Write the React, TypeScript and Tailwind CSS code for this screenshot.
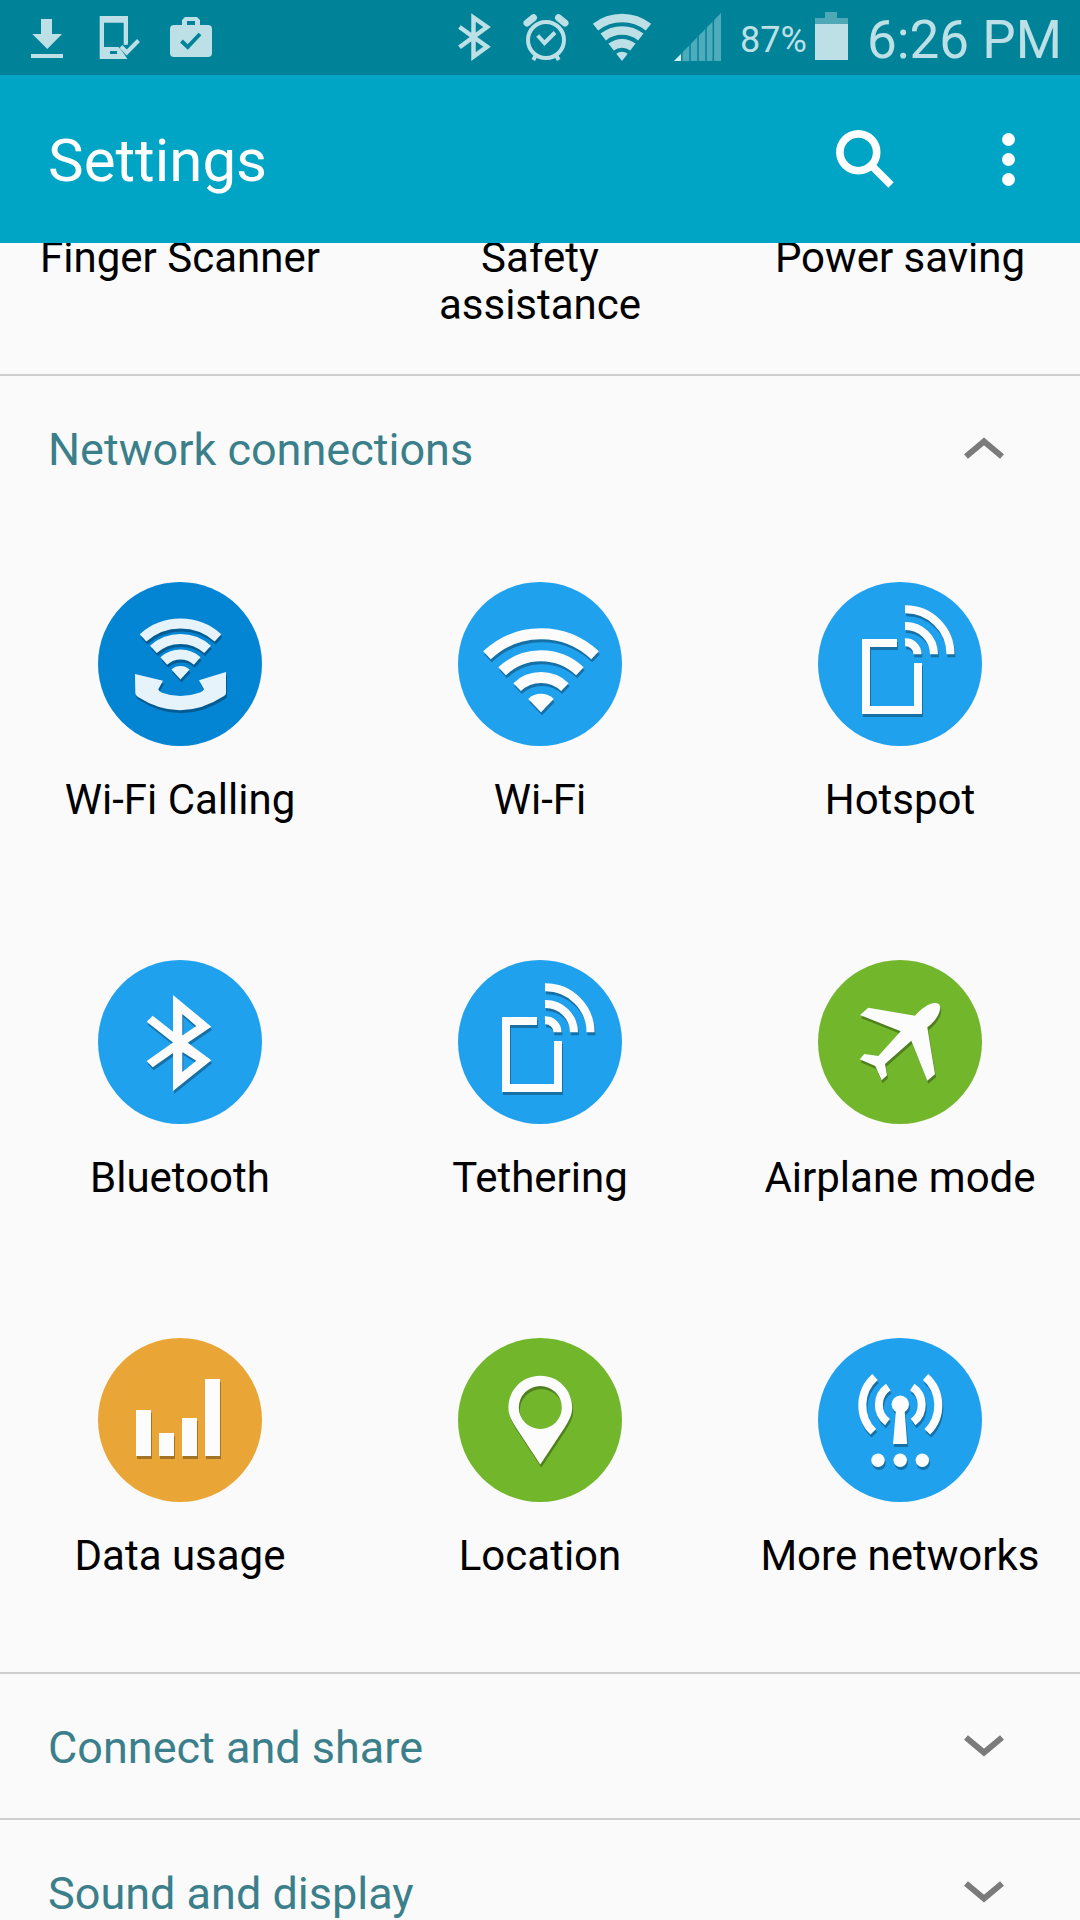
import { useState } from "react";
import type { ReactNode } from "react";

interface WifiWavesProps {
  cx: number;
  cy: number;
  radii: number[];
  dot: number;
  width: number;
  angle: number;
}

// Concentric bands that fan out upwards from (cx, cy)
function WifiWaves({ cx, cy, radii, dot, width, angle }: WifiWavesProps) {
  const a = (angle * Math.PI) / 180;
  const point = (r: number, side: number) => `${cx + side * r * Math.sin(a)} ${cy - r * Math.cos(a)}`;

  return (
    <>
      {radii.map((r) => (
        <path
          key={r}
          d={`M${point(r, -1)} A${r} ${r} 0 0 1 ${point(r, 1)}`}
          fill="none"
          stroke="currentColor"
          strokeWidth={width}
        />
      ))}
      <path d={`M${cx} ${cy} L${point(dot, -1)} A${dot} ${dot} 0 0 1 ${point(dot, 1)} Z`} fill="currentColor" />
    </>
  );
}

function HotspotGlyph() {
  return (
    <g fill="none" stroke="currentColor" strokeWidth="8">
      <path d="M79 61H48V128H100V81" />
      <path d="M87 27.3A45 45 0 0 1 132.5 72.3" />
      <path d="M87 44A28.5 28.5 0 0 1 116 72.3" />
      <path d="M87 60.3A12 12 0 0 1 99.5 72.3" />
    </g>
  );
}

const GLYPHS: Record<string, ReactNode> = {
  wifiCalling: (
    <g className="text-[#e6f3fb]">
      <WifiWaves cx={82.5} cy={97.5} radii={[56, 40.5, 25]} dot={13.6} width={10} angle={42} />
      <path
        d="M37 92 65 98.7 60.3 107.3Q61 110 64 110.7Q82.5 117.5 102 110.5Q105 110 106 107.3L101 98.3 128 90V111Q128 113 126 114Q82.5 142 40 115Q37.5 113.5 37.3 111Z"
        fill="currentColor"
      />
    </g>
  ),
  wifi: <WifiWaves cx={83} cy={130.3} radii={[78.5, 56.5, 34.7]} dot={18.5} width={11} angle={43.5} />,
  hotspot: <HotspotGlyph />,
  bluetooth: (
    <path
      fillRule="evenodd"
      fill="currentColor"
      d="M75 35 113.3 66.7 89.7 82.7 113.3 100.3 75 131V93L54.7 107.3 48.7 101 75 82.5 48.7 61.7 54.7 55.7 75 71.7ZM84.3 54V75.5L98.3 66ZM84.3 92V112L98.3 100.7Z"
    />
  ),
  airplane: (
    <path
      fill="currentColor"
      d="M97 55.7 50.3 47.7 42 55 82.7 71.3 60.3 96 46.3 94 41.7 99.3 57.3 106 63.7 120.3 69 115.3 67 104 93.3 80.7 109.3 120.7 117 114.3 109.3 67.3C118 61 125 50 121 44C114 40.5 104 48 97 55.7Z"
    />
  ),
  data: (
    <path fill="currentColor" d="M38 72H53V118H38ZM61 95H76V118H61ZM84 80H99V118H84ZM107 41H122V118H107Z" />
  ),
  location: (
    <path
      fillRule="evenodd"
      fill="currentColor"
      d="M82.3 37.7C64 37.7 50.4 52 50.4 70C50.4 77 54 83 58 89.5L82.3 126.5 106.7 89.5C110.7 83 114.2 77 114.2 70C114.2 52 100.6 37.7 82.3 37.7ZM82.3 48A21.4 21.4 0 1 1 82.3 91A21.4 21.4 0 1 1 82.3 48Z"
    />
  ),
  antenna: (
    <g fill="currentColor">
      <circle cx="82.3" cy="66.3" r="8.7" />
      <path d="M78 72H86.6L89.2 106H75Z" />
      <circle cx="60" cy="122.3" r="6.7" />
      <circle cx="82.2" cy="122.3" r="6.7" />
      <circle cx="104.3" cy="122.3" r="6.7" />
      <g fill="none" stroke="currentColor" strokeWidth="8">
        <path d="M70.3 49A21.5 21.5 0 0 0 69.5 84" />
        <path d="M94.3 49A21.5 21.5 0 0 1 95.1 84" />
        <path d="M57 39A37.7 37.7 0 0 0 55.3 93.8" />
        <path d="M107.6 39A37.7 37.7 0 0 1 109.3 93.8" />
      </g>
    </g>
  ),
};

interface Tile {
  label: string;
  glyph: string;
  color: string;
}

const NETWORK_TILES: Tile[] = [
  { label: "Wi-Fi Calling", glyph: "wifiCalling", color: "bg-[#0385d3]" },
  { label: "Wi-Fi", glyph: "wifi", color: "bg-[#20a1ee]" },
  { label: "Hotspot", glyph: "hotspot", color: "bg-[#20a1ee]" },
  { label: "Bluetooth", glyph: "bluetooth", color: "bg-[#20a1ee]" },
  { label: "Tethering", glyph: "hotspot", color: "bg-[#20a1ee]" },
  { label: "Airplane mode", glyph: "airplane", color: "bg-[#72b62b]" },
  { label: "Data usage", glyph: "data", color: "bg-[#e9a637]" },
  { label: "Location", glyph: "location", color: "bg-[#72b62b]" },
  { label: "More networks", glyph: "antenna", color: "bg-[#20a1ee]" },
];

const QUICK_LABELS = ["Finger Scanner", "Safety assistance", "Power saving"];

function SettingTile({ label, glyph, color }: Tile) {
  return (
    <button className="flex flex-col items-center px-8 pt-[44px] pb-[45px]">
      <span className={`block size-[164px] rounded-full text-[#fcfcfc] ${color}`}>
        <svg viewBox="0 0 164 164" className="size-full drop-shadow-[1px_3px_0_rgba(0,0,0,0.3)]" aria-hidden="true">
          {GLYPHS[glyph]}
        </svg>
      </span>
      <span className="mt-[30px] min-h-[95px] text-[42px] leading-[47px]">{label}</span>
    </button>
  );
}

interface SectionProps {
  title: string;
  defaultOpen?: boolean;
  children?: ReactNode;
}

function Section({ title, defaultOpen = false, children }: SectionProps) {
  const [open, setOpen] = useState(defaultOpen);

  return (
    <section className="border-t-2 border-[#cecece]">
      <button
        onClick={() => setOpen(!open)}
        aria-expanded={open}
        className="flex h-[144px] w-full items-center justify-between pr-[76px] pl-12 text-left text-[#3b7f8b]"
      >
        <span className="pt-[3px] text-[45px] leading-[54px]">{title}</span>
        <svg
          viewBox="0 0 40 22"
          className={open ? "h-[22px] w-10 rotate-180" : "h-[22px] w-10"}
          fill="none"
          stroke="#7b7b7b"
          strokeWidth="6"
          aria-hidden="true"
        >
          <path d="M2 2.5 20 17.5 38 2.5" />
        </svg>
      </button>
      {open && children}
    </section>
  );
}

function StatusBar() {
  return (
    <div className="flex h-[75px] shrink-0 items-center justify-between bg-[#008399] pr-[18px] pb-px pl-[23px] text-[#bce0e5]">
      <div className="flex gap-6">
        <svg viewBox="0 0 48 48" className="size-12" fill="currentColor" aria-label="Download">
          <path d="M18 6H29V21H39L24.3 36 9.3 21H18ZM8 41H40V45H8Z" />
        </svg>
        <svg viewBox="0 0 48 48" className="size-12" aria-label="Device check">
          <path fillRule="evenodd" fill="currentColor" d="M4.7 3H33V46H4.7ZM9 9.7V34H28.7V9.7Z" />
          <path d="M15 38H22V41H15Z" fill="#008399" />
          <path d="M20 31Q25 34 33 47L46 33V28L31 32Z" fill="#008399" />
          <path d="M26 33.5 31.7 39.5 43.5 27.5" fill="none" stroke="currentColor" strokeWidth="4" />
        </svg>
        <svg viewBox="0 0 48 48" className="size-12" aria-label="Work">
          <path fillRule="evenodd" fill="currentColor" d="M15 13V7L18 4H30L33 7V13ZM20 8V12H28V8Z" />
          <rect x="3" y="12" width="42" height="32" rx="4" fill="currentColor" />
          <path d="M14.5 28 20.7 34 33 21" fill="none" stroke="#008399" strokeWidth="4" />
        </svg>
      </div>
      <div className="flex items-center">
        <div className="flex gap-6">
          <svg viewBox="0 0 48 48" className="size-12 overflow-visible" aria-label="Bluetooth">
            <path
              d="M9.5 14 37 33.7 23.5 43.5V4.5L37 14 9.5 34.3"
              fill="none"
              stroke="currentColor"
              strokeWidth="4.5"
            />
          </svg>
          <svg viewBox="0 0 48 48" className="size-12" fill="none" stroke="currentColor" aria-label="Alarm">
            <circle cx="24" cy="27" r="18" strokeWidth="4" />
            <path d="M15.7 22.5 22.5 30 33 19.5" strokeWidth="4" />
            <path d="M5 10 11.5 4.7M43 10 36.5 4.7" strokeWidth="7" strokeLinecap="round" />
            <path d="M14.5 41 11.3 47M33.5 41 36.7 47" strokeWidth="4" />
          </svg>
          <svg viewBox="0 0 56 48" className="h-12 w-14 overflow-visible" aria-label="Wi-Fi">
            <WifiWaves cx={28} cy={48} radii={[43, 30.5, 17.7]} dot={9.3} width={8.7} angle={38} />
          </svg>
          <svg viewBox="0 0 48 48" className="size-12" aria-label="Signal">
            <path d="M0 48 47 0V48Z" fill="#4eabbb" />
            <path d="M7.8 0V48M16 0V48M24 0V48M32 0V48M39.3 0V48" stroke="#008399" strokeWidth="1.5" />
            <path d="M0 48 7 41V48Z" fill="#d2f2f6" />
          </svg>
        </div>
        <span className="ml-[18px] pt-[6px] text-[36px] leading-[42px]">87%</span>
        <svg viewBox="0 0 34 48" className="ml-2 h-12 w-[34px] overflow-visible" aria-label="Battery">
          <path d="M0 5H10V-1H22V5H33V11H0Z" fill="#4ea8b6" />
          <path d="M0 11H33V47H0Z" fill="currentColor" />
        </svg>
        <span className="ml-[18px] pt-[6px] text-[53px] leading-[64px]">6:26 PM</span>
      </div>
    </div>
  );
}

export default function App() {
  return (
    <div className="flex h-screen flex-col overflow-hidden bg-[#fafafa] font-['Roboto',sans-serif] text-black">
      <StatusBar />
      <header className="flex h-[168px] shrink-0 items-center justify-between bg-[#00a4c4] pr-[42px] pl-12 text-white">
        <h1 className="pt-1 text-[60px] leading-[70px]">Settings</h1>
        <div className="flex items-center gap-[84px]">
          <button aria-label="Search">
            <svg viewBox="0 0 58 58" className="size-[58px]" fill="none" stroke="currentColor">
              <circle cx="22.3" cy="22.3" r="18.4" strokeWidth="7.6" />
              <path d="M34 34 55 55" strokeWidth="7.5" />
            </svg>
          </button>
          <button aria-label="More options" className="flex w-[60px] flex-col items-center gap-[7px]">
            <span className="size-[13px] rounded-full bg-white" />
            <span className="size-[13px] rounded-full bg-white" />
            <span className="size-[13px] rounded-full bg-white" />
          </button>
        </div>
      </header>
      <main className="min-h-0 flex-1 overflow-hidden">
        <div className="-mt-[9px] grid grid-cols-3 pb-[46px]">
          {QUICK_LABELS.map((label) => (
            <button key={label} className="flex min-h-[94px] justify-center px-8 text-[42px] leading-[47px]">
              {label}
            </button>
          ))}
        </div>
        <Section title="Network connections" defaultOpen>
          <div className="grid grid-cols-3 pt-[18px]">
            {NETWORK_TILES.map((tile) => (
              <SettingTile key={tile.label} {...tile} />
            ))}
          </div>
        </Section>
        <Section title="Connect and share" />
        <Section title="Sound and display" />
      </main>
    </div>
  );
}
